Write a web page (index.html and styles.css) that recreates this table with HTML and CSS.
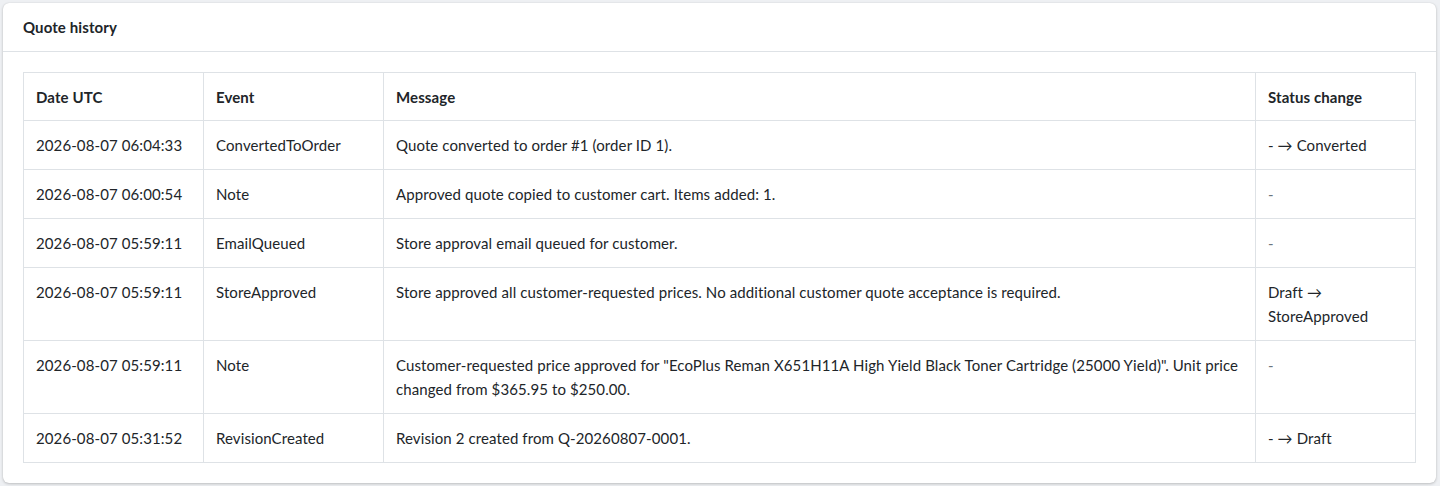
FILE: index.html
```html
<!DOCTYPE html>
<html>
<head>
    <title>Quote history</title>
    <link rel="stylesheet" href="styles.css">
</head>
<body>
    <div class="card">
        <div class="card-header">Quote history</div>
        <div class="card-body">
            <table class="history-table">
                <colgroup>
                    <col class="col-date">
                    <col class="col-event">
                    <col>
                    <col class="col-status">
                </colgroup>
                <thead>
                    <tr>
                        <th>Date UTC</th>
                        <th>Event</th>
                        <th>Message</th>
                        <th>Status change</th>
                    </tr>
                </thead>
                <tbody>
                    <tr>
                        <td>2026-08-07 06:04:33</td>
                        <td>ConvertedToOrder</td>
                        <td>Quote converted to order #1 (order ID 1).</td>
                        <td>- → Converted</td>
                    </tr>
                    <tr>
                        <td>2026-08-07 06:00:54</td>
                        <td>Note</td>
                        <td>Approved quote copied to customer cart. Items added: 1.</td>
                        <td class="muted">-</td>
                    </tr>
                    <tr>
                        <td>2026-08-07 05:59:11</td>
                        <td>EmailQueued</td>
                        <td>Store approval email queued for customer.</td>
                        <td class="muted">-</td>
                    </tr>
                    <tr>
                        <td>2026-08-07 05:59:11</td>
                        <td>StoreApproved</td>
                        <td>Store approved all customer-requested prices. No additional customer quote acceptance is required.</td>
                        <td>Draft → StoreApproved</td>
                    </tr>
                    <tr>
                        <td>2026-08-07 05:59:11</td>
                        <td>Note</td>
                        <td>Customer-requested price approved for "EcoPlus Reman X651H11A High Yield Black Toner Cartridge (25000 Yield)". Unit price changed from $365.95 to $250.00.</td>
                        <td class="muted">-</td>
                    </tr>
                    <tr>
                        <td>2026-08-07 05:31:52</td>
                        <td>RevisionCreated</td>
                        <td>Revision 2 created from Q-20260807-0001.</td>
                        <td>- → Draft</td>
                    </tr>
                </tbody>
            </table>
        </div>
    </div>
</body>
</html>
```

FILE: styles.css
```css
body {
    margin: 0;
    padding: 3px 4px 3px 3px;
    font-family: "Source Sans Pro", Lato, sans-serif;
    font-size: 15px;
    letter-spacing: 0.1px;
    color: #212529;
    background-color: #eef0f3;
}
.card {
    background: white;
    border-radius: 6px;
    box-shadow: 0 0 1px rgba(0, 0, 0, 0.15), 0 1px 3px rgba(0, 0, 0, 0.2);
}
.card-header {
    padding: 0 20px;
    height: 48px;
    line-height: 48px;
    font-weight: bold;
    border-bottom: 1px solid #dee2e6;
}
.card-body {
    padding: 20px;
}
.history-table {
    width: 100%;
    border-collapse: collapse;
    table-layout: fixed;
}
.col-date,
.col-event {
    width: 180px;
}
.col-status {
    width: 160px;
}
.history-table th,
.history-table td {
    border: 1px solid #dee2e6;
    padding: 12px;
    line-height: 24px;
    text-align: left;
    vertical-align: top;
}
.history-table th {
    padding-bottom: 11px;
    font-weight: bold;
}
.muted {
    color: #6c757d;
}
```
